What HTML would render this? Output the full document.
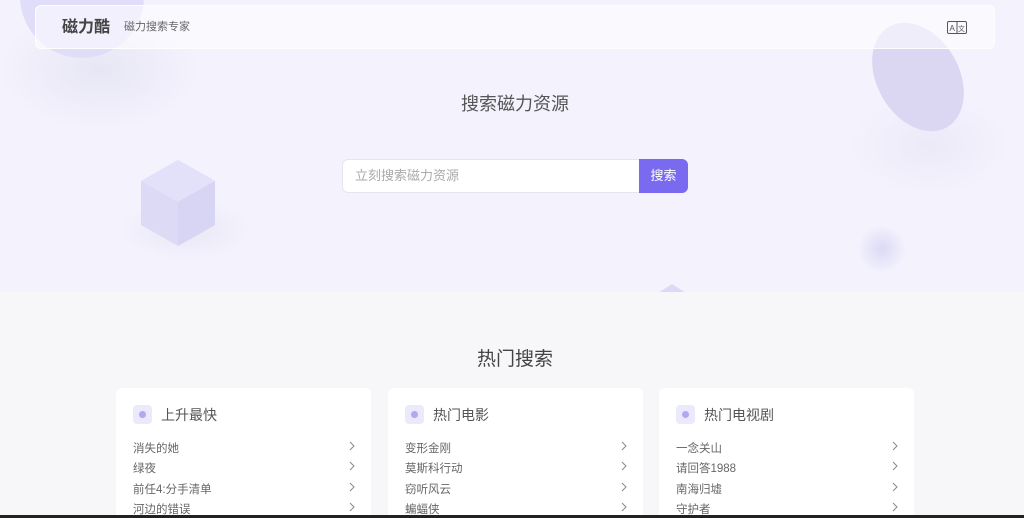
<!DOCTYPE html>
<html><head><meta charset="utf-8"><style>
*{margin:0;padding:0;box-sizing:border-box}
html,body{width:1024px;height:518px;overflow:hidden}
body{background:#f7f7f9;font-family:"Liberation Sans","Noto Sans CJK SC",sans-serif;position:relative}
.hero{position:absolute;left:0;top:0;width:1024px;height:292px;background:#f3f2fd;overflow:hidden}
.abs{position:absolute}
.hdr{position:absolute;left:35px;top:5px;width:960px;height:44px;background:rgba(255,255,255,.55);border:1px solid rgba(255,255,255,.8);border-radius:6px}
.card{position:absolute;top:388px;width:255px;height:130px;background:#fff;border-radius:6px 6px 0 0}
.card .ic{position:absolute;left:17px;top:17px;width:19px;height:19px;border-radius:4px;background:#ebe9fc}
.card .ic:after{content:"";position:absolute;left:6px;top:6px;width:7px;height:7px;border-radius:50%;background:#b0a8f2}
.card .t{position:absolute;left:45px;top:17px;font-size:14px;color:#555;line-height:20px}
.card .it{position:absolute;left:17px;font-size:11.5px;color:#666;line-height:16px}
.card svg.ch{position:absolute;right:16px}
</style></head><body>
<div class="hero">
 <div class="abs" style="left:0;top:10px;width:200px;height:120px;border-radius:50%;background:radial-gradient(closest-side,rgba(220,218,235,.5),rgba(243,242,253,0))"></div>
 <div class="abs" style="left:20px;top:-66px;width:124px;height:124px;border-radius:50%;background:#e0ddf8"></div>
 <div class="abs" style="left:120px;top:200px;width:130px;height:60px;border-radius:50%;background:radial-gradient(closest-side,rgba(225,223,238,.6),rgba(243,242,253,0))"></div>
 <svg class="abs" style="left:138px;top:159px" width="80" height="88" viewBox="0 0 80 88"><polygon points="40,1 77,22 77,66 40,87 3,66 3,22" fill="#dddaf6"/><polygon points="40,1 77,22 40,43 3,22" fill="#e3e0fa"/><polygon points="40,43 77,22 77,66 40,87" fill="#d8d4f3"/></svg>
 <div class="abs" style="left:850px;top:95px;width:160px;height:100px;border-radius:50%;background:radial-gradient(closest-side,rgba(232,230,244,.7),rgba(243,242,253,0))"></div>
 <div class="abs" style="left:877px;top:19px;width:82px;height:116px;border-radius:50%;background:#dbd7f3;transform:rotate(-30deg)"></div>
 <div class="abs" style="left:858px;top:225px;width:48px;height:48px;border-radius:50%;background:radial-gradient(closest-side,#dcd9f5,rgba(243,242,253,0))"></div>
 <div class="abs" style="left:658px;top:284px;width:0;height:0;border-left:14px solid transparent;border-right:14px solid transparent;border-bottom:9px solid #dcd8f5"></div>
 <div class="hdr">
  <span class="abs" style="left:26px;top:11px;font-size:16px;font-weight:bold;color:#444;line-height:22px">磁力酷</span>
  <span class="abs" style="left:88px;top:13px;font-size:11px;color:#666;line-height:16px">磁力搜索专家</span>
  <svg class="abs" style="left:911px;top:15px" width="20" height="13" viewBox="0 0 20 13"><rect x=".5" y=".5" width="19" height="12" rx="1.5" fill="none" stroke="#555"/><line x1="10" y1="1" x2="10" y2="12" stroke="#555"/><text x="2.5" y="10" font-size="8" fill="#555" font-family="Liberation Sans">A</text><text x="11" y="10" font-size="7" fill="#555" font-family="Noto Sans CJK SC">文</text></svg>
 </div>
 <div class="abs" style="left:0;width:1030px;top:92px;text-align:center;font-size:18px;color:#555;line-height:24px">搜索磁力资源</div>
 <div class="abs" style="left:342px;top:159px;width:298px;height:34px;background:#fff;border:1px solid #e5e4ef;border-radius:6px 0 0 6px"><span class="abs" style="left:12px;top:7px;font-size:13px;color:#aaa;line-height:18px">立刻搜索磁力资源</span></div>
 <div class="abs" style="left:639px;top:159px;width:49px;height:34px;background:#7a6af0;border-radius:0 6px 6px 0;color:#fff;font-size:13px;text-align:center;line-height:33px">搜索</div>
</div>
<div class="abs" style="left:0;width:1030px;top:347px;text-align:center;font-size:19px;color:#444;line-height:26px">热门搜索</div>
<div class="card" style="left:116px"><div class="ic"></div><div class="t">上升最快</div>
<div class="it" style="top:53px">消失的她</div><svg class="ch" style="top:53px" width="6" height="10"><path d="M1 1l4 4-4 4" fill="none" stroke="#888"/></svg>
<div class="it" style="top:73px">绿夜</div><svg class="ch" style="top:73px" width="6" height="10"><path d="M1 1l4 4-4 4" fill="none" stroke="#888"/></svg>
<div class="it" style="top:94px">前任4:分手清单</div><svg class="ch" style="top:94px" width="6" height="10"><path d="M1 1l4 4-4 4" fill="none" stroke="#888"/></svg>
<div class="it" style="top:114px">河边的错误</div><svg class="ch" style="top:114px" width="6" height="10"><path d="M1 1l4 4-4 4" fill="none" stroke="#888"/></svg></div>
<div class="card" style="left:388px"><div class="ic"></div><div class="t">热门电影</div>
<div class="it" style="top:53px">变形金刚</div><svg class="ch" style="top:53px" width="6" height="10"><path d="M1 1l4 4-4 4" fill="none" stroke="#888"/></svg>
<div class="it" style="top:73px">莫斯科行动</div><svg class="ch" style="top:73px" width="6" height="10"><path d="M1 1l4 4-4 4" fill="none" stroke="#888"/></svg>
<div class="it" style="top:94px">窃听风云</div><svg class="ch" style="top:94px" width="6" height="10"><path d="M1 1l4 4-4 4" fill="none" stroke="#888"/></svg>
<div class="it" style="top:114px">蝙蝠侠</div><svg class="ch" style="top:114px" width="6" height="10"><path d="M1 1l4 4-4 4" fill="none" stroke="#888"/></svg></div>
<div class="card" style="left:659px"><div class="ic"></div><div class="t">热门电视剧</div>
<div class="it" style="top:53px">一念关山</div><svg class="ch" style="top:53px" width="6" height="10"><path d="M1 1l4 4-4 4" fill="none" stroke="#888"/></svg>
<div class="it" style="top:73px">请回答1988</div><svg class="ch" style="top:73px" width="6" height="10"><path d="M1 1l4 4-4 4" fill="none" stroke="#888"/></svg>
<div class="it" style="top:94px">南海归墟</div><svg class="ch" style="top:94px" width="6" height="10"><path d="M1 1l4 4-4 4" fill="none" stroke="#888"/></svg>
<div class="it" style="top:114px">守护者</div><svg class="ch" style="top:114px" width="6" height="10"><path d="M1 1l4 4-4 4" fill="none" stroke="#888"/></svg></div>
<div class="abs" style="left:0;top:515px;width:1024px;height:3px;background:#222"></div>
</body></html>
